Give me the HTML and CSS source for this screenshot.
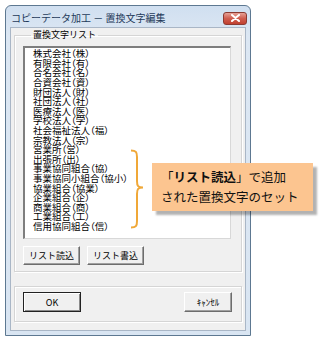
FILE: index.html
```html
<!DOCTYPE html>
<html lang="ja">
<head>
    <meta charset="UTF-8">
    <title>置換文字編集</title>
    <link rel="stylesheet" href="styles.css">
</head>
<body>
    <div class="window">
        <div class="titlebar">
            <span class="title">コピーデータ加工 － 置換文字編集</span>
            <button class="close" aria-label="閉じる">
                <svg width="11" height="8" viewBox="0 0 11 8"><path d="M2 1 L9 7 M9 1 L2 7" stroke="#fff" stroke-width="2" stroke-linecap="round"/></svg>
            </button>
        </div>
        <div class="client">
            <fieldset class="group">
                <legend>置換文字リスト</legend>
                <ul class="listbox" id="list"></ul>
                <div class="row">
                    <button class="btn btn-list">リスト読込</button>
                    <button class="btn btn-list">リスト書込</button>
                </div>
            </fieldset>
            <fieldset class="group group-bottom">
                <div class="row row-spread">
                    <button class="btn btn-ok">OK</button>
                    <button class="btn btn-cancel">ｷｬﾝｾﾙ</button>
                </div>
            </fieldset>
        </div>
    </div>

    <!-- annotation over the dialog -->
    <svg class="brace" width="16" height="80" viewBox="0 0 16 80">
        <path d="M2 1.5 C7 1.5 8 3 8 8 L8 32 C8 37 9 38.5 14 38.5 C9 38.5 8 40 8 45 L8 72 C8 77 7 78.5 2 78.5" fill="none" stroke="#f0a838" stroke-width="2"/>
    </svg>
    <div class="callout">
        <div>「<b>リスト読込</b>」で追加</div>
        <div>された置換文字のセット</div>
    </div>

    <script>
        const items = [
            '株式会社（株）', '有限会社（有）', '合名会社（名）', '合資会社（資）',
            '財団法人（財）', '社団法人（社）', '医療法人（医）', '学校法人（学）',
            '社会福祉法人（福）', '宗教法人（宗）', '営業所（営）', '出張所（出）',
            '事業協同組合（協）', '事業協同小組合（協小）', '協業組合（協業）',
            '企業組合（企）', '商業組合（商）', '工業組合（工）', '信用協同組合（信）'
        ];
        const list = document.getElementById('list');
        items.forEach(text => {
            const li = document.createElement('li');
            li.textContent = text;
            list.appendChild(li);
        });
    </script>
</body>
</html>
```

FILE: styles.css
```css
body {
    margin: 0;
    background: #fff;
    font-family: "Noto Sans CJK JP", "Noto Sans", sans-serif;
    color: #000;
    position: relative;
    width: 322px;
    height: 339px;
    overflow: hidden;
}
.window {
    margin: 5px 0 0 5px;
    width: 246px;
    height: 331px;
    border: 1px solid #5d7891;
    border-radius: 6px 6px 0 0;
    background: linear-gradient(#d0dff0, #dce7f3 30px, #d9e5f2);
    padding: 0 4px 4px 4px;
    box-sizing: border-box;
    display: flex;
    flex-direction: column;
}
.titlebar {
    height: 21px;
    display: flex;
    align-items: center;
    justify-content: space-between;
    flex-shrink: 0;
}
.title {
    font-size: 10px;
    color: #1e3a5a;
    padding-left: 1px;
    padding-top: 1px;
}
.close {
    width: 24px;
    height: 13px;
    margin-top: 3px;
    margin-right: -1px;
    border: 1px solid #8b3a32;
    border-radius: 3px;
    background: linear-gradient(#e6a196, #cf5d4f 50%, #c1402f);
    padding: 0;
    display: flex;
    align-items: center;
    justify-content: center;
}
.client {
    flex: 1;
    background: #f0f0f0;
    border: 1px solid #a9b6c6;
    padding: 0 3px;
}
.group {
    margin: 0;
    border: 1px solid #d5d5d5;
    box-shadow: inset 1px 1px 0 #fff, 1px 1px 0 #fff;
    padding: 4px 10px 6px 8px;
}
.group legend {
    font-size: 9px;
    line-height: 14px;
    padding: 0 2px;
    margin-left: 8px;
}
.listbox {
    list-style: none;
    margin: 0;
    padding: 1.2px 0 0 8px;
    height: 193px;
    box-sizing: border-box;
    background: #fff;
    border-top: 2px solid #7e7e7e;
    border-left: 2px solid #7e7e7e;
    border-right: 1px solid #d8d8d8;
    border-bottom: 1px solid #d8d8d8;
    font-size: 9.5px;
    line-height: 9.6px;
    font-feature-settings: "palt";
    overflow: hidden;
}
.listbox li {
    white-space: nowrap;
}
.row {
    display: flex;
    gap: 7px;
    margin-top: 7px;
}
.row-spread {
    justify-content: space-between;
    margin-top: 0;
}
.btn {
    font-family: inherit;
    font-size: 9px;
    color: #000;
    background: #f0f0f0;
    border: 1px solid;
    border-color: #fff #6d6d6d #6d6d6d #fff;
    box-shadow: inset -1px -1px 0 #a0a0a0;
    padding: 0;
}
.btn-list {
    width: 57px;
    height: 19px;
}
.group-bottom {
    margin-top: 14px;
    padding: 5px 9px 9px 8px;
}
.btn-ok {
    width: 58px;
    height: 20px;
    border: 1px solid #222;
    box-shadow: inset 1px 1px 0 #fff, inset -1px -1px 0 #8a8a8a;
}
.btn-cancel {
    width: 48px;
    height: 20px;
}
.brace {
    position: absolute;
    left: 129px;
    top: 149px;
}
.callout {
    position: absolute;
    left: 152px;
    top: 163px;
    width: 161px;
    height: 48px;
    box-sizing: border-box;
    padding: 4px 0 0 9px;
    background: #fcc590;
    box-shadow: 4px 4px 2px rgba(0, 0, 0, 0.3);
    font-size: 12.5px;
    line-height: 20px;
    color: #111;
}
.callout b {
    font-weight: 700;
}
```
